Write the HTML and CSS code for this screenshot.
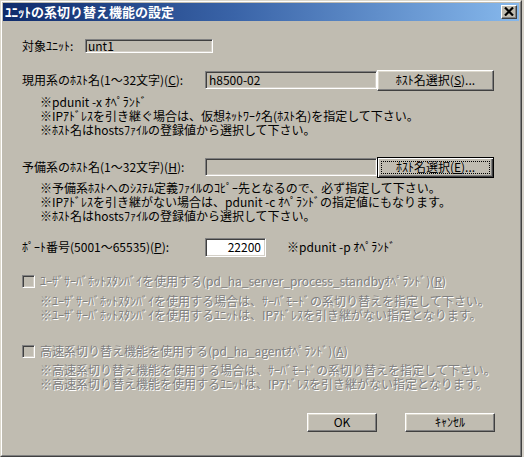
FILE: index.html
```html
<!DOCTYPE html>
<html lang="ja">
<head>
<meta charset="utf-8">
<title>ﾕﾆｯﾄの系切り替え機能の設定</title>
<link rel="stylesheet" href="styles.css">
</head>
<body>
<div class="window">
  <div class="frame">
    <div class="titlebar">
      <span class="title">ﾕﾆｯﾄの系切り替え機能の設定</span>
      <span class="close"><svg width="10" height="9" viewBox="0 0 10 9"><path d="M1 0.5L9 8.5M9 0.5L1 8.5" stroke="#000" stroke-width="2.2" fill="none"/></svg></span>
    </div>
    <div class="content">
      <div class="row r-unit">
        <span class="lbl-unit">対象ﾕﾆｯﾄ:</span>
        <span class="field f-unit">unt1</span>
      </div>

      <div class="row r-host1">
        <span class="lbl">現用系のﾎｽﾄ名(1～32文字)(<u>C</u>):</span>
        <span class="field f-host">h8500-02</span>
        <span class="btn b-host">ﾎｽﾄ名選択(<u>S</u>)...</span>
      </div>
      <div class="notes n1">
        <div>※pdunit -x ｵﾍﾟﾗﾝﾄﾞ</div>
        <div>※IPｱﾄﾞﾚｽを引き継ぐ場合は、仮想ﾈｯﾄﾜｰｸ名(ﾎｽﾄ名)を指定して下さい。</div>
        <div>※ﾎｽﾄ名はhostsﾌｧｲﾙの登録値から選択して下さい。</div>
      </div>

      <div class="row r-host2">
        <span class="lbl">予備系のﾎｽﾄ名(1～32文字)(<u>H</u>):</span>
        <span class="field f-host"></span>
        <span class="btn b-host default"><span class="focus">ﾎｽﾄ名選択(<u>E</u>)...</span></span>
      </div>
      <div class="notes n2">
        <div>※予備系ﾎｽﾄへのｼｽﾃﾑ定義ﾌｧｲﾙのｺﾋﾟｰ先となるので、必ず指定して下さい。</div>
        <div>※IPｱﾄﾞﾚｽを引き継がない場合は、pdunit -c ｵﾍﾟﾗﾝﾄﾞの指定値にもなります。</div>
        <div>※ﾎｽﾄ名はhostsﾌｧｲﾙの登録値から選択して下さい。</div>
      </div>

      <div class="row r-port">
        <span class="lbl">ﾎﾟｰﾄ番号(5001～65535)(<u>P</u>):</span>
        <span class="field f-port">22200</span>
        <span class="port-note">※pdunit -p ｵﾍﾟﾗﾝﾄﾞ</span>
      </div>

      <div class="row r-cb1 disabled">
        <span class="checkbox"></span>
        <span class="cb-label">ﾕｰｻﾞｻｰﾊﾞﾎｯﾄｽﾀﾝﾊﾞｲを使用する(pd_ha_server_process_standbyｵﾍﾟﾗﾝﾄﾞ)(<u>R</u>)</span>
      </div>
      <div class="notes n3 disabled">
        <div>※ﾕｰｻﾞｻｰﾊﾞﾎｯﾄｽﾀﾝﾊﾞｲを使用する場合は、ｻｰﾊﾞﾓｰﾄﾞの系切り替えを指定して下さい。</div>
        <div>※ﾕｰｻﾞｻｰﾊﾞﾎｯﾄｽﾀﾝﾊﾞｲを使用するﾕﾆｯﾄは、IPｱﾄﾞﾚｽを引き継がない指定となります。</div>
      </div>

      <div class="row r-cb2 disabled">
        <span class="checkbox"></span>
        <span class="cb-label">高速系切り替え機能を使用する(pd_ha_agentｵﾍﾟﾗﾝﾄﾞ)(<u>A</u>)</span>
      </div>
      <div class="notes n4 disabled">
        <div>※高速系切り替え機能を使用する場合は、ｻｰﾊﾞﾓｰﾄﾞの系切り替えを指定して下さい。</div>
        <div>※高速系切り替え機能を使用するﾕﾆｯﾄは、IPｱﾄﾞﾚｽを引き継がない指定となります。</div>
      </div>

      <div class="row r-btns">
        <span class="btn b-ok">OK</span>
        <span class="btn b-cancel">ｷｬﾝｾﾙ</span>
      </div>
    </div>
  </div>
</div>
</body>
</html>
```
FILE: styles.css
```css
:root {
  --bg: #c0bcb1;
}

html, body {
  margin: 0;
  padding: 0;
}

body {
  background: #d4d0c8;
  font-family: "Noto Sans CJK JP", "Liberation Sans", sans-serif;
  font-size: 12px;
  line-height: 14px;
  color: #000;
}

.window {
  width: 522px;
  height: 457px;
  box-sizing: border-box;
  border: 1px solid;
  border-color: #dcd8cc #404040 #404040 #dcd8cc;
  background: var(--bg);
}

.frame {
  height: 100%;
  box-sizing: border-box;
  border: 1px solid;
  border-color: #ffffff #808080 #808080 #ffffff;
  padding: 1px;
  display: flex;
  flex-direction: column;
}

.titlebar {
  height: 18px;
  flex: none;
  background: linear-gradient(90deg, #0f2b6b 0%, #3a64a8 45%, #86b8ec 100%);
  display: flex;
  align-items: center;
  justify-content: space-between;
  padding-left: 2px;
}

.title {
  color: #fff;
  font-weight: bold;
  font-size: 13px;
  line-height: 16px;
}

.close {
  width: 16px;
  height: 14px;
  box-sizing: border-box;
  margin-right: 2px;
  background: var(--bg);
  border: 1px solid;
  border-color: #ffffff #404040 #404040 #ffffff;
  box-shadow: inset -1px -1px #808080;
  display: flex;
  align-items: center;
  justify-content: center;
}

.close svg {
  display: block;
  margin: 0 1px 1px 0;
}

.content {
  padding-left: 19px;
  padding-right: 24px;
  display: flex;
  flex-direction: column;
}

.row {
  height: 20px;
  display: flex;
  align-items: center;
  white-space: nowrap;
}

u {
  text-decoration: underline;
  text-underline-offset: 1px;
}

.lbl-unit {
  width: 63px;
  flex: none;
}

.lbl {
  width: 183px;
  flex: none;
}

.field {
  box-sizing: border-box;
  border: 1px solid;
  border-color: #808080 #ffffff #ffffff #808080;
  box-shadow: inset 1px 1px #404040, inset -1px -1px #d4d0c8;
  background: var(--bg);
  padding: 0 3px;
  display: flex;
  align-items: center;
  flex: none;
}

.f-unit {
  width: 128px;
  height: 14px;
  padding-left: 2px;
}

.f-host {
  width: 172px;
  height: 18px;
}

.f-port {
  width: 61px;
  height: 19px;
  background: #ffffff;
  justify-content: flex-end;
  padding-right: 4px;
}

.port-note {
  margin-left: 21px;
}

.btn {
  box-sizing: border-box;
  height: 21px;
  border: 1px solid;
  border-color: #ffffff #404040 #404040 #ffffff;
  box-shadow: inset -1px -1px #808080, inset 1px 1px #dcd8cc;
  background: var(--bg);
  display: flex;
  align-items: center;
  justify-content: center;
  flex: none;
}

.b-host {
  width: 117px;
}

.r-host1 .b-host {
  margin-left: 0;
}

.btn.default {
  border: 1px solid #000;
  box-shadow: inset 1px 1px #ffffff, inset -1px -1px #404040, inset -2px -2px #808080;
  padding: 3px;
}

.focus {
  flex: 1;
  align-self: stretch;
  display: flex;
  align-items: center;
  justify-content: center;
  outline: 1px dotted #000;
  outline-offset: -1px;
}

.notes {
  padding-left: 18px;
  white-space: nowrap;
}

.notes div {
  height: 14px;
}

.checkbox {
  width: 13px;
  height: 13px;
  box-sizing: border-box;
  border: 1px solid;
  border-color: #808080 #ffffff #ffffff #808080;
  box-shadow: inset 1px 1px #404040, inset -1px -1px #d4d0c8;
  background: var(--bg);
  flex: none;
}

.cb-label {
  margin-left: 5px;
}

.disabled .cb-label,
.notes.disabled {
  color: #808080;
  text-shadow: 1px 1px 0 #ffffff;
}

.r-unit { margin-top: 15px; }
.r-host1 { margin-top: 14px; }
.n1 { margin-top: 5px; }
.r-host2 { margin-top: 20px; }
.n2 { margin-top: 4px; }
.r-port { margin-top: 14px; }
.r-cb1 { margin-top: 14px; }
.n3 { margin-top: 3px; }
.r-cb2 { margin-top: 19px; }
.n4 { margin-top: 2px; }

.r-btns {
  margin-top: 21px;
  justify-content: flex-end;
  gap: 28px;
}

.b-ok {
  width: 70px;
  height: 19px;
}

.b-cancel {
  width: 90px;
  height: 19px;
}
```
